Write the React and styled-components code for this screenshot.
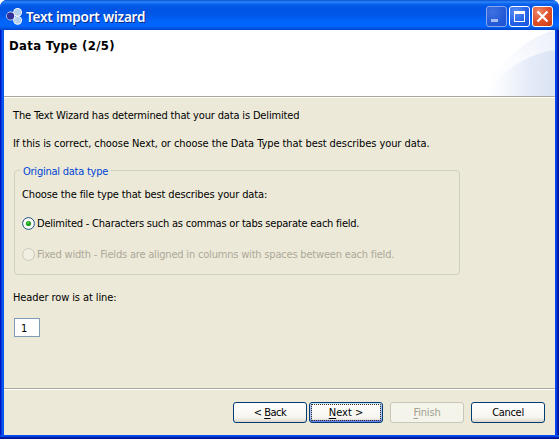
import React from "react";
import styled, { createGlobalStyle, css } from "styled-components";

const GlobalStyle = createGlobalStyle`
  html, body { margin: 0; padding: 0; background: #fff; overflow: hidden; }
  * { box-sizing: border-box; }
`;

const Window = styled.div`
  width: 559px;
  height: 439px;
  display: flex;
  flex-direction: column;
  overflow: hidden;
  border-radius: 7px 7px 0 0;
  background: #0046e0;
  font-family: "DejaVu Sans Condensed", "DejaVu Sans", sans-serif;
  font-stretch: condensed;
  font-size: 11px;
  line-height: 14px;
  color: #000;
  white-space: pre;
`;

const TitleBar = styled.header`
  flex: none;
  height: 30px;
  display: flex;
  align-items: center;
  padding: 3px 6px 0 6px;
  background: linear-gradient(
    #0a4fd0 0, #2a86fb 2px, #0a62ee 4px, #0055e4 8px, #0057e8 15px,
    #0064fa 21px, #0066ff 26px, #0058e6 28px, #0043c8 30px
  );
`;

const Title = styled.h1`
  margin: 0 auto 0 4px;
  font: 600 13.5px/18px "Noto Sans", sans-serif;
  letter-spacing: ${(p) => p.$spacing}px;
  color: #fff;
  text-shadow: 1px 1px 0 #0b2a8c;
`;

const Controls = styled.div`
  display: flex;
  gap: 2px;
`;

const ControlButton = styled.button`
  width: 21px;
  height: 21px;
  padding: 0;
  display: block;
  border: 1px solid ${(p) => (p.$dim ? "#86a5f0" : "#fff")};
  border-radius: 3px;
  background: ${(p) =>
    p.$close
      ? "radial-gradient(circle at 30% 25%, #ec8a6c, #e0512c 50%, #c93c10)"
      : p.$dim
      ? "radial-gradient(circle at 30% 25%, #3f72e0, #245ad8 60%, #1c50d0)"
      : "radial-gradient(circle at 30% 25%, #5c90f6, #2663e8 55%, #1550dc)"};
  svg { display: block; }
`;

const Frame = styled.div`
  flex: 1;
  display: flex;
  flex-direction: column;
  border: solid;
  border-width: 0 4px 4px 4px;
  border-color: transparent;
  background:
    linear-gradient(#ece9d8, #ece9d8) padding-box,
    linear-gradient(transparent 405px, #0050ee 405px 406px, #0040dc 406px 407px, #0020b0 407px 408px, #001290 408px) border-box,
    linear-gradient(90deg, #0016c4 0 1px, #0038e0 1px 2px, #0a5cf0 2px 3px, #0050ea 3px 4px, transparent 4px 555px, #0046ee 555px 556px, #0040e0 556px 557px, #0024b8 557px 558px, #00139c 558px) border-box;
`;

const Banner = styled.section`
  flex: none;
  height: 67px;
  display: flex;
  justify-content: space-between;
  background: #fff;
  border-bottom: 1px solid #aca899;
`;

const BannerTitle = styled.h2`
  margin: 8px 0 0 5px;
  font-size: 13px;
  line-height: 16px;
  font-weight: bold;
  letter-spacing: ${(p) => p.$spacing}px;
`;

const Content = styled.main`
  flex: 1;
  border-top: 1px solid #fff;
  padding: 11px 9px 0 9px;
`;

const Text = styled.p`
  margin: 0;
  height: 14px;
  letter-spacing: ${(p) => p.$spacing || 0}px;
  color: ${(p) => (p.$muted ? "#aca899" : "#000")};
`;

const Intro = styled.div`
  display: grid;
  gap: 14px;
  margin-bottom: 12px;
`;

const Group = styled.fieldset`
  width: 446px;
  height: 112px;
  margin: 0 0 16px 1px;
  padding: 11px 7px 0;
  border: 1px solid #d0d0bf;
  border-radius: 4px;
  min-width: 0;
`;

const Legend = styled.legend`
  padding: 0 3px;
  margin-left: -2px;
  height: 14px;
  line-height: 18px;
  color: #0046d5;
  letter-spacing: ${(p) => p.$spacing}px;
`;

const RadioRow = styled.label`
  display: flex;
  gap: 2px;
  height: 14px;
  margin-top: ${(p) => p.$top}px;
  svg { margin-top: -1px; }
`;

const LineInput = styled.input`
  display: block;
  width: 26px;
  height: 19px;
  margin: 13px 0 0 1px;
  padding: 1px 0 0 6px;
  border: 1px solid #7f9db9;
  border-radius: 0;
  outline: 0;
  background: #fff;
  font: inherit;
  color: #000;
`;

const Footer = styled.footer`
  flex: none;
  height: 47px;
  display: flex;
  justify-content: flex-end;
  padding: 13px 10px 0 0;
  border-top: 1px solid #aca899;
  box-shadow: inset 0 1px #fff;
`;

const PushButton = styled.button`
  width: 74px;
  height: 21px;
  padding: 1px 0 0;
  margin-left: ${(p) => p.$gap}px;
  border: 1px solid #003c74;
  border-radius: 3px;
  background: linear-gradient(#fff, #f6f5f0 75%, #dcd7cb);
  font: inherit;
  line-height: 16px;
  letter-spacing: ${(p) => p.$spacing || 0}px;
  color: #000;
  u { text-underline-offset: 2px; text-decoration-thickness: 1px; }
  ${(p) =>
    p.$focused &&
    css`
      box-shadow: inset 0 1px #cee7ff, inset 0 -2px #6982ee, inset 2px 0 #a9c3f2, inset -2px 0 #a9c3f2;
      outline: 1px dotted #3a2f20;
      outline-offset: -3px;
    `}
  &:disabled {
    border-color: #c9c7ba;
    background: #f5f4ea;
    color: #a1a192;
  }
`;

const AppIcon = () => (
  <svg width="16" height="17" viewBox="0 0 16 17">
    <g fill="#fff">
      <circle cx="4.6" cy="8" r="4.4" />
      <circle cx="11.6" cy="4.3" r="4.4" />
      <circle cx="11.6" cy="12.3" r="4.4" />
    </g>
    <circle cx="11.6" cy="4.3" r="3.5" fill="#b4d0ec" />
    <circle cx="11.6" cy="12.3" r="3.5" fill="#b4d0ec" />
    <circle cx="4.5" cy="8" r="3.7" fill="#30309a" />
  </svg>
);

const Swoosh = () => (
  <svg width="75" height="66" viewBox="0 0 75 66">
    <defs>
      <linearGradient id="outer" gradientUnits="userSpaceOnUse" x1="12" y1="66" x2="75" y2="10">
        <stop offset="0" stopColor="#fff" />
        <stop offset="0.5" stopColor="#fafbfe" />
        <stop offset="1" stopColor="#edf1fa" />
      </linearGradient>
      <linearGradient id="inner" gradientUnits="userSpaceOnUse" x1="8" y1="50" x2="75" y2="56">
        <stop offset="0" stopColor="#e4ebf8" stopOpacity="0" />
        <stop offset="0.3" stopColor="#e4ebf8" stopOpacity="0.35" />
        <stop offset="0.6" stopColor="#e1e9f7" stopOpacity="0.85" />
        <stop offset="1" stopColor="#dae3f4" />
      </linearGradient>
    </defs>
    <path d="M0 66C14 40 39 10 75 0V66Z" fill="url(#outer)" />
    <path d="M4 66C20 43 43 25 75 20V66Z" fill="url(#inner)" />
  </svg>
);

const Radio = ({ checked, disabled }) => (
  <svg width="13" height="14" viewBox="0 0 13 14">
    <circle cx="6.5" cy="7.5" r="5.9" fill={disabled ? "#f1efe2" : "#fbfbf9"} stroke={disabled ? "#cac8bb" : "#1d5281"} />
    {checked && <circle cx="6.5" cy="7.5" r="2.6" fill="#21a121" />}
    {checked && <circle cx="6" cy="7" r="1" fill="#55d551" />}
  </svg>
);

export default function App() {
  return (
    <>
      <GlobalStyle />
      <Window>
        <TitleBar>
          <AppIcon />
          <Title $spacing={-0.2}>Text import wizard</Title>
          <Controls>
            <ControlButton $dim aria-label="Minimize">
              <svg width="19" height="19"><path d="M4 12h7v3H4z" fill="#a6bcf4" /></svg>
            </ControlButton>
            <ControlButton aria-label="Maximize">
              <svg width="19" height="19"><path d="M4 4h11v11H4zM5 7v7h9V7z" fill="#fff" fillRule="evenodd" /></svg>
            </ControlButton>
            <ControlButton $close aria-label="Close">
              <svg width="19" height="19"><path d="M4.5 4.5l10 10M14.5 4.5l-10 10" stroke="#fff" strokeWidth="2.2" /></svg>
            </ControlButton>
          </Controls>
        </TitleBar>
        <Frame>
          <Banner>
            <BannerTitle $spacing={0.34}>Data Type (2/5)</BannerTitle>
            <Swoosh />
          </Banner>
          <Content>
            <Intro>
              <Text $spacing={-0.155}>The Text Wizard has determined that your data is Delimited</Text>
              <Text $spacing={-0.07}>If this is correct, choose Next, or choose the Data Type that best describes your data.</Text>
            </Intro>
            <Group>
              <Legend $spacing={-0.24}>Original data type</Legend>
              <Text $spacing={-0.13}>Choose the file type that best describes your data:</Text>
              <RadioRow $top={15}>
                <Radio checked />
                <Text $spacing={-0.22}>Delimited - Characters such as commas or tabs separate each field.</Text>
              </RadioRow>
              <RadioRow $top={17}>
                <Radio disabled />
                <Text $muted $spacing={-0.19}>Fixed width - Fields are aligned in columns with spaces between each field.</Text>
              </RadioRow>
            </Group>
            <Text $spacing={-0.1}>Header row is at line:</Text>
            <LineInput defaultValue="1" />
          </Content>
          <Footer>
            <PushButton $spacing={-0.5}>&lt; <u>B</u>ack</PushButton>
            <PushButton $focused $gap={2}><u>N</u>ext &gt;</PushButton>
            <PushButton disabled $gap={7} $spacing={-0.15}><u>F</u>inish</PushButton>
            <PushButton $gap={7} $spacing={-0.3}>Cancel</PushButton>
          </Footer>
        </Frame>
      </Window>
    </>
  );
}
